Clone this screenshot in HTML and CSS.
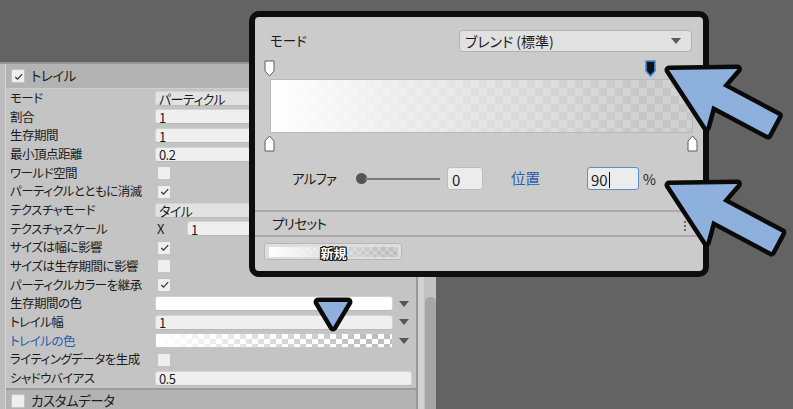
FILE: index.html
```html
<!DOCTYPE html>
<html>
<head>
    <link rel="stylesheet" href="styles.css">
</head>
<body>
    <div class="inspector">
        <div class="panel">
            <div class="section-head">
                <span class="check on"><svg viewBox="0 0 12 12"><path d="M2.5 6.5 L5 9 L10 3.5"/></svg></span>
                <span>トレイル</span>
            </div>
            <div class="rows">
                <div class="row">
                    <span class="label">モード</span>
                    <div class="value"><div class="field dropdown">パーティクル</div></div>
                </div>
                <div class="row">
                    <span class="label">割合</span>
                    <div class="value"><div class="field">1</div></div>
                </div>
                <div class="row">
                    <span class="label">生存期間</span>
                    <div class="value"><div class="field">1</div></div>
                </div>
                <div class="row">
                    <span class="label">最小頂点距離</span>
                    <div class="value"><div class="field">0.2</div></div>
                </div>
                <div class="row">
                    <span class="label">ワールド空間</span>
                    <div class="value"><span class="check"></span></div>
                </div>
                <div class="row">
                    <span class="label">パーティクルとともに消滅</span>
                    <div class="value"><span class="check on"><svg viewBox="0 0 12 12"><path d="M2.5 6.5 L5 9 L10 3.5"/></svg></span></div>
                </div>
                <div class="row">
                    <span class="label">テクスチャモード</span>
                    <div class="value"><div class="field dropdown">タイル</div></div>
                </div>
                <div class="row">
                    <span class="label">テクスチャスケール</span>
                    <div class="value">
                        <span class="axis">X</span>
                        <div class="field">1</div>
                    </div>
                </div>
                <div class="row">
                    <span class="label">サイズは幅に影響</span>
                    <div class="value"><span class="check on"><svg viewBox="0 0 12 12"><path d="M2.5 6.5 L5 9 L10 3.5"/></svg></span></div>
                </div>
                <div class="row">
                    <span class="label">サイズは生存期間に影響</span>
                    <div class="value"><span class="check"></span></div>
                </div>
                <div class="row">
                    <span class="label">パーティクルカラーを継承</span>
                    <div class="value"><span class="check on"><svg viewBox="0 0 12 12"><path d="M2.5 6.5 L5 9 L10 3.5"/></svg></span></div>
                </div>
                <div class="row">
                    <span class="label">生存期間の色</span>
                    <div class="value">
                        <div class="field color-white"></div>
                        <span class="menu-arrow"></span>
                    </div>
                </div>
                <div class="row">
                    <span class="label">トレイル幅</span>
                    <div class="value">
                        <div class="field">1</div>
                        <span class="menu-arrow"></span>
                    </div>
                </div>
                <div class="row">
                    <span class="label modified">トレイルの色</span>
                    <div class="value">
                        <div class="field color-gradient"></div>
                        <span class="menu-arrow"></span>
                    </div>
                </div>
                <div class="row">
                    <span class="label">ライティングデータを生成</span>
                    <div class="value"><span class="check"></span></div>
                </div>
                <div class="row">
                    <span class="label">シャドウバイアス</span>
                    <div class="value"><div class="field">0.5</div></div>
                </div>
            </div>
            <div class="section-head closed">
                <span class="check"></span>
                <span>カスタムデータ</span>
            </div>
        </div>
        <div class="scrollbar"><div class="thumb"></div></div>
    </div>

    <!-- gradient editor window -->
    <div class="gradient-editor">
        <div class="mode-row">
            <span>モード</span>
            <div class="blend-select">ブレンド (標準)<span class="select-arrow"></span></div>
        </div>
        <div class="keys">
            <span class="key" style="left: 0%"><svg viewBox="0 0 11 17"><path d="M1 1 H10 V11 L5.5 16 L1 11 Z"/></svg></span>
            <span class="key selected" style="left: 90%"><svg viewBox="0 0 11 17"><path d="M1 1 H10 V11 L5.5 16 L1 11 Z"/></svg></span>
        </div>
        <div class="gradient-bar"></div>
        <div class="keys bottom">
            <span class="key" style="left: 0%"><svg viewBox="0 0 11 17"><path d="M1 16 H10 V6 L5.5 1 L1 6 Z"/></svg></span>
            <span class="key" style="left: 100%"><svg viewBox="0 0 11 17"><path d="M1 16 H10 V6 L5.5 1 L1 6 Z"/></svg></span>
        </div>
        <div class="alpha-row">
            <span class="alpha-label">アルファ</span>
            <div class="slider"><span class="knob"></span><span class="track"></span></div>
            <div class="num-input">0</div>
            <span class="location-label">位置</span>
            <div class="num-input location focused">90<span class="caret"></span></div>
            <span class="percent">%</span>
        </div>
        <div class="presets-head">
            <span>プリセット</span>
            <span class="kebab"><i></i><i></i><i></i></span>
        </div>
        <div class="presets">
            <div class="preset-swatch"><div class="preset-bar">新規</div></div>
        </div>
    </div>

    <svg class="pointers" viewBox="0 0 793 409">
        <polygon transform="translate(669 70) rotate(28)" points="0,0 60,-33 55,-11 118,-11 118,11 55,11 60,33"/>
        <polygon transform="translate(669 185) rotate(28)" points="0,0 60,-33 55,-11 122,-11 122,11 55,11 60,33"/>
        <polygon points="318,302 348,302 333,327"/>
    </svg>
</body>
</html>
```

FILE: styles.css
```css
:root {
    --bg-color: #636363;
    --panel-bg: #c4c4c4;
    --header-bg: #b3b3b3;
    --field-bg: #efefef;
    --field-border: #b9b9b9;
    --text-color: #1c1c1c;
    --link-color: #2a5da8;
    --editor-bg: #cbcbcb;
    --pointer-fill: #8db0dd;
}

* {
    box-sizing: border-box;
}

body {
    margin: 0;
    width: 793px;
    height: 409px;
    overflow: hidden;
    position: relative;
    background: var(--bg-color);
    font-family: "Noto Sans CJK JP", "Noto Sans", sans-serif;
    font-feature-settings: "palt";
    font-size: 13px;
    line-height: 1;
    color: var(--text-color);
}

/* inspector */

.inspector {
    display: flex;
    width: 436px;
    height: 347px;
    margin-top: 62px;
}

.panel {
    flex: 1;
    display: flex;
    flex-direction: column;
    border-top: 2px solid #979797;
    background: linear-gradient(to right, #bdbdbd 5px, #d5d5d5 5px 6px, var(--panel-bg) 6px);
}

.section-head {
    height: 25px;
    margin-left: 6px;
    padding-left: 5px;
    display: flex;
    align-items: center;
    gap: 6px;
    background: var(--header-bg);
    border-bottom: 1px solid #cecece;
    font-size: 13.5px;
    letter-spacing: -0.5px;
}

.section-head.closed {
    flex: 1;
    align-items: flex-start;
    padding-top: 4px;
    border-bottom: none;
    border-top: 2px solid #9c9c9c;
}

.rows {
    display: flex;
    flex-direction: column;
}

.row {
    height: 18.67px;
    display: flex;
    align-items: center;
}

.label {
    width: 155px;
    padding-left: 10px;
    white-space: nowrap;
    font-size: 12.5px;
    letter-spacing: -0.5px;
}

.label.modified {
    color: var(--link-color);
}

.value {
    flex: 1;
    display: flex;
    align-items: center;
    padding-right: 4px;
}

.field {
    flex: 1;
    height: 15px;
    padding: 1px 0 0 3px;
    display: flex;
    align-items: center;
    background: var(--field-bg);
    border: 1px solid #d2d2d2;
    border-bottom-color: var(--field-border);
    border-radius: 3px;
    font-size: 13px;
    letter-spacing: -0.6px;
}

.field.dropdown {
    background: #e2e2e2;
}

.field.color-white {
    background: #ffffff;
}

.field.color-gradient {
    border-radius: 0;
    border-color: #c8c8c8;
    background-image:
        linear-gradient(to right, #ffffff, rgba(255, 255, 255, 0) 90%),
        conic-gradient(#ffffff 25%, #bdbdbd 0 50%, #ffffff 0 75%, #bdbdbd 0);
    background-size: 100% 100%, 12px 10px;
}

.axis {
    width: 32px;
    padding-left: 2px;
    font-size: 13px;
}

.check {
    width: 14px;
    height: 14px;
    margin-left: 2px;
    display: inline-flex;
    align-items: center;
    justify-content: center;
    background: var(--field-bg);
    border: 1px solid #c4c4c4;
    border-radius: 2px;
}

.section-head .check {
    margin-left: 0;
}

.check svg {
    width: 11px;
    height: 11px;
    fill: none;
    stroke: #333333;
    stroke-width: 1.3;
}

.menu-arrow {
    width: 19px;
    display: flex;
    justify-content: center;
    padding-left: 3px;
}

.menu-arrow::after {
    content: "";
    border-left: 5px solid transparent;
    border-right: 5px solid transparent;
    border-top: 6px solid #565656;
}

.scrollbar {
    width: 20px;
    border-left: 2px solid #9a9a9a;
    background: linear-gradient(to right, #d2d2d2 6px, #c2c2c2 6px);
    padding-left: 7px;
}

.thumb {
    width: 11px;
    height: 120px;
    margin-top: 235px;
    background: #a6a6a6;
    border-radius: 5px 5px 0 0;
}

/* gradient editor */

.gradient-editor {
    position: absolute;
    left: 249px;
    top: 11px;
    width: 460px;
    height: 266px;
    border: 6px solid #0e0e0e;
    border-radius: 10px;
    background: var(--editor-bg);
    display: flex;
    flex-direction: column;
}

.mode-row {
    height: 36px;
    padding: 11px 11px 0 15px;
    display: flex;
    align-items: center;
    justify-content: space-between;
    font-size: 13.5px;
}

.blend-select {
    width: 233px;
    height: 22px;
    padding: 1px 10px 0 5px;
    display: flex;
    align-items: center;
    justify-content: space-between;
    background: #e1e1e1;
    border: 1px solid #b3b3b3;
    border-radius: 4px;
    font-size: 14px;
}

.select-arrow {
    border-left: 5px solid transparent;
    border-right: 5px solid transparent;
    border-top: 6px solid #5a5a5a;
}

.keys {
    position: relative;
    height: 18px;
    margin: 7px 10px 0 15px;
}

.keys.bottom {
    margin-top: 2px;
}

.key {
    position: absolute;
    top: 0;
    width: 11px;
    height: 17px;
    margin-left: -6px;
}

.key svg {
    display: block;
    width: 11px;
    height: 17px;
    fill: #ffffff;
    stroke: #5c5c5c;
    stroke-width: 1;
}

.key.selected svg {
    fill: #111111;
    stroke: #3d8fe6;
    stroke-width: 1.6;
}

.gradient-bar {
    height: 54px;
    margin: 1px 10px 0 15px;
    border: 1px solid #b9b9b9;
    background-image:
        linear-gradient(to right, #ffffff, rgba(255, 255, 255, 0) 90%),
        conic-gradient(#d1d1d1 25%, #c5c5c5 0 50%, #d1d1d1 0 75%, #c5c5c5 0);
    background-size: 100% 100%, 16px 16px;
}

.alpha-row {
    height: 23px;
    margin-top: 14px;
    display: flex;
    align-items: center;
    font-size: 13.5px;
}

.alpha-label {
    width: 101px;
    padding-left: 37px;
    letter-spacing: -0.8px;
}

.slider {
    position: relative;
    width: 84px;
    height: 11px;
    display: flex;
    align-items: center;
}

.knob {
    width: 11px;
    height: 11px;
    border-radius: 50%;
    background: #555555;
}

.track {
    flex: 1;
    height: 2px;
    margin-left: -2px;
    background: #7a7a7a;
}

.num-input {
    width: 36px;
    height: 23px;
    margin-left: 7px;
    padding: 2px 0 0 4px;
    display: flex;
    align-items: center;
    background: #ececec;
    border: 1px solid #bdbdbd;
    border-radius: 3px;
    font-size: 15px;
}

.location-label {
    width: 104px;
    padding-left: 28px;
    color: var(--link-color);
    font-size: 14.5px;
}

.num-input.location {
    width: 52px;
    margin-left: 0;
    padding-left: 3px;
}

.num-input.focused {
    border: 1.5px solid #5d8fd0;
}

.caret {
    width: 1px;
    height: 16px;
    margin-left: 1px;
    background: #111111;
}

.percent {
    margin-left: 4px;
    font-size: 14px;
}

.presets-head {
    height: 27px;
    margin-top: 20px;
    padding: 1px 17px 0 17px;
    display: flex;
    align-items: center;
    justify-content: space-between;
    border-top: 2px solid #aaaaaa;
    border-bottom: 2px solid #aaaaaa;
    font-size: 13.5px;
    letter-spacing: -0.6px;
}

.kebab {
    display: flex;
    flex-direction: column;
    gap: 2px;
    margin-top: 3px;
}

.kebab i {
    width: 2px;
    height: 2px;
    background: #6a6a6a;
}

.presets {
    padding: 6px 0 0 9px;
}

.preset-swatch {
    width: 138px;
    height: 17px;
    padding: 3px 3px 2px 4px;
    background: #dedede;
    border: 1px solid #b6b6b6;
    border-radius: 3px;
}

.preset-bar {
    height: 100%;
    display: flex;
    align-items: center;
    justify-content: center;
    background-image:
        linear-gradient(to right, #ffffff, rgba(255, 255, 255, 0) 90%),
        conic-gradient(#cfcfcf 25%, #bfbfbf 0 50%, #cfcfcf 0 75%, #bfbfbf 0);
    background-size: 100% 100%, 8px 8px;
    color: #ffffff;
    font-weight: bold;
    font-size: 13px;
    text-shadow: 1px 0 0 #111, -1px 0 0 #111, 0 1px 0 #111, 0 -1px 0 #111,
        1px 1px 0 #111, -1px -1px 0 #111, 1px -1px 0 #111, -1px 1px 0 #111;
}

/* callout arrows */

.pointers {
    position: absolute;
    left: 0;
    top: 0;
    width: 793px;
    height: 409px;
    pointer-events: none;
}

.pointers polygon {
    fill: var(--pointer-fill);
    stroke: #0a0a0a;
    stroke-width: 9;
    stroke-linejoin: round;
    paint-order: stroke;
}
```
